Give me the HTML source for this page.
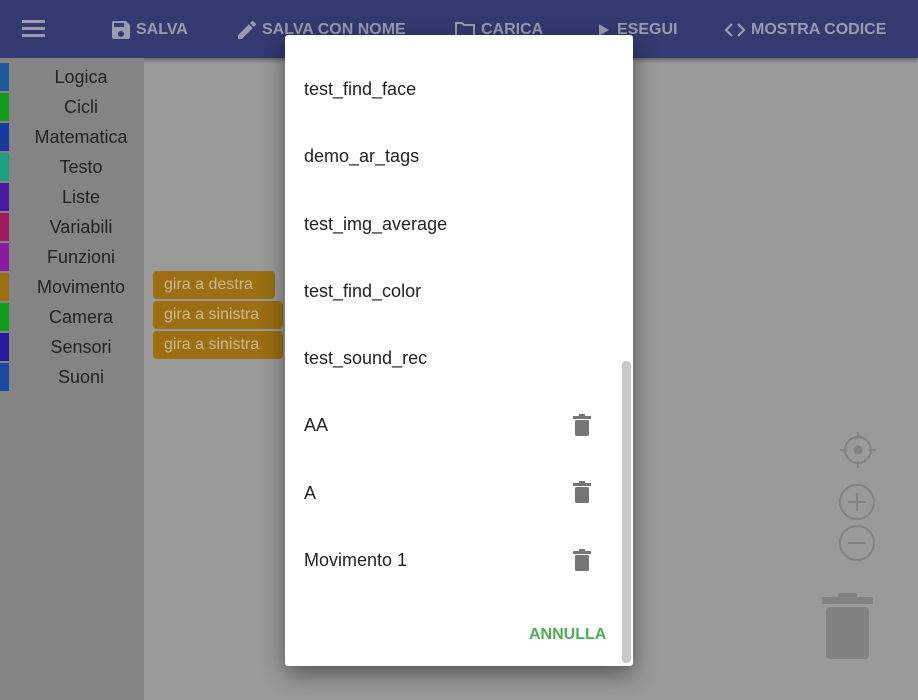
<!DOCTYPE html>
<html><head><meta charset="utf-8"><style>
body{margin:0;width:918px;height:700px;overflow:hidden;font-family:"Liberation Sans",sans-serif;background:#9a9a9a;position:relative}
.hdr{position:absolute;left:0;top:0;width:918px;height:58px;background:#323a70;box-shadow:0 2px 4px rgba(0,0,0,.4)}
.hdr .it{position:absolute;top:18px;color:#9a9cad;font-size:16px;font-weight:bold;display:flex;align-items:center;gap:3px}
.side{position:absolute;left:0;top:58px;width:144px;height:642px;background:#848484}
.cat{position:absolute;left:0;width:144px;height:30px;line-height:30px;text-align:center;font-size:18px;color:#222;padding-left:18px;box-sizing:border-box}
.cat i{position:absolute;left:0;top:1px;width:9px;height:28px}
.blk{position:absolute;left:153px;height:28px;background:#9b6f12;color:#c9b995;font-size:16px;line-height:28px;padding-left:11px;border-radius:4px;box-sizing:border-box}
.dlg{position:absolute;left:285px;top:35px;width:348px;height:631px;background:#fff;border-radius:3px;box-shadow:0 8px 24px rgba(0,0,0,.45)}
.row{position:absolute;left:19px;font-size:18px;color:#222}
.tr{position:absolute;left:288px}
.sb{position:absolute;left:337px;top:326px;width:9px;height:302px;background:#c8c8c8;border-radius:4px}
</style></head><body>
<div class="hdr">
<div style="position:absolute;left:22px;top:20px;width:23px;height:3px;background:#9a9cad;box-shadow:0 7px 0 #9a9cad,0 14px 0 #9a9cad"></div>
<div class="it" style="left:109px"><svg width="24" height="24" viewBox="0 0 24 24"><path fill="#9a9cad" d="M17 3H5a2 2 0 0 0-2 2v14a2 2 0 0 0 2 2h14a2 2 0 0 0 2-2V7l-4-4zm-5 16a3 3 0 1 1 0-6 3 3 0 0 1 0 6zm3-10H5V5h10v4z"/></svg>SALVA</div>
<div class="it" style="left:235px"><svg width="24" height="24" viewBox="0 0 24 24"><path fill="#9a9cad" d="M3 17.25V21h3.75L17.8 9.94l-3.75-3.75L3 17.25zM20.7 7.04a1 1 0 0 0 0-1.41l-2.34-2.34a1 1 0 0 0-1.41 0l-1.83 1.83 3.75 3.75 1.83-1.83z"/></svg>SALVA CON NOME</div>
<div class="it" style="left:452px"><svg width="26" height="24" viewBox="0 0 24 24"><path fill="none" stroke="#9a9cad" stroke-width="2" d="M3 5h6l2 2h10v12H3z"/></svg>CARICA</div>
<div class="it" style="left:594px"><svg width="20" height="24" viewBox="0 0 24 24"><path fill="#9a9cad" d="M6 5v14l12-7z"/></svg>ESEGUI</div>
<div class="it" style="left:722px"><svg width="26" height="24" viewBox="0 0 24 24"><path fill="none" stroke="#9a9cad" stroke-width="2.2" d="M9 6l-6 6 6 6M15 6l6 6-6 6"/></svg>MOSTRA CODICE</div>
</div>
<div class="side">
<div class="cat" style="top:4px"><i style="background:#1a5a99"></i>Logica</div>
<div class="cat" style="top:34px"><i style="background:#0f9a1a"></i>Cicli</div>
<div class="cat" style="top:64px"><i style="background:#1a38a0"></i>Matematica</div>
<div class="cat" style="top:94px"><i style="background:#1aa080"></i>Testo</div>
<div class="cat" style="top:124px"><i style="background:#4a1aa0"></i>Liste</div>
<div class="cat" style="top:154px"><i style="background:#a01a60"></i>Variabili</div>
<div class="cat" style="top:184px"><i style="background:#8a1aa0"></i>Funzioni</div>
<div class="cat" style="top:214px"><i style="background:#9b6f12"></i>Movimento</div>
<div class="cat" style="top:244px"><i style="background:#0f9a1a"></i>Camera</div>
<div class="cat" style="top:274px"><i style="background:#2a1aa0"></i>Sensori</div>
<div class="cat" style="top:304px"><i style="background:#1a4aa0"></i>Suoni</div>
</div>
<div class="blk" style="top:271px;width:122px">gira a destra</div>
<div class="blk" style="top:301px;width:130px">gira a sinistra</div>
<div class="blk" style="top:331px;width:130px">gira a sinistra</div>
<svg style="position:absolute;left:838px;top:430px" width="40" height="40" viewBox="0 0 40 40"><circle cx="20" cy="20" r="13" fill="none" stroke="#828282" stroke-width="2"/><circle cx="20" cy="20" r="4.5" fill="#828282"/><path d="M20 2v7M20 31v7M2 20h7M31 20h7" stroke="#828282" stroke-width="2"/></svg>
<svg style="position:absolute;left:837px;top:482px" width="40" height="80" viewBox="0 0 40 80"><circle cx="20" cy="20" r="17" fill="none" stroke="#828282" stroke-width="2"/><path d="M20 11v18M11 20h18" stroke="#828282" stroke-width="2"/><circle cx="20" cy="61" r="17" fill="none" stroke="#828282" stroke-width="2"/><path d="M11 61h18" stroke="#828282" stroke-width="2"/></svg>
<svg style="position:absolute;left:822px;top:592px" width="52" height="68" viewBox="0 0 52 68"><rect x="0" y="5" width="51" height="7" fill="#828282"/><rect x="16" y="1" width="19" height="6" rx="2" fill="#828282"/><rect x="4" y="15" width="43" height="52" rx="4" fill="#828282"/></svg>
<div class="dlg">
<div class="row" style="top:44px">test_find_face</div>
<div class="row" style="top:111px">demo_ar_tags</div>
<div class="row" style="top:179px">test_img_average</div>
<div class="row" style="top:246px">test_find_color</div>
<div class="row" style="top:313px">test_sound_rec</div>
<div class="row" style="top:380px">AA</div>
<div class="row" style="top:448px">A</div>
<div class="row" style="top:515px">Movimento 1</div>
<svg class="tr" style="top:379px" width="18" height="22" viewBox="0 0 18 22"><rect x="0" y="2" width="18" height="3" fill="#757575"/><rect x="6" y="0" width="6" height="3" fill="#757575"/><rect x="2" y="6" width="14" height="16" rx="1.5" fill="#757575"/></svg>
<svg class="tr" style="top:446px" width="18" height="22" viewBox="0 0 18 22"><rect x="0" y="2" width="18" height="3" fill="#757575"/><rect x="6" y="0" width="6" height="3" fill="#757575"/><rect x="2" y="6" width="14" height="16" rx="1.5" fill="#757575"/></svg>
<svg class="tr" style="top:514px" width="18" height="22" viewBox="0 0 18 22"><rect x="0" y="2" width="18" height="3" fill="#757575"/><rect x="6" y="0" width="6" height="3" fill="#757575"/><rect x="2" y="6" width="14" height="16" rx="1.5" fill="#757575"/></svg>
<div style="position:absolute;left:244px;top:591px;font-size:16px;font-weight:bold;color:#4caf50">ANNULLA</div>
<div class="sb"></div>
</div>
</body></html>
